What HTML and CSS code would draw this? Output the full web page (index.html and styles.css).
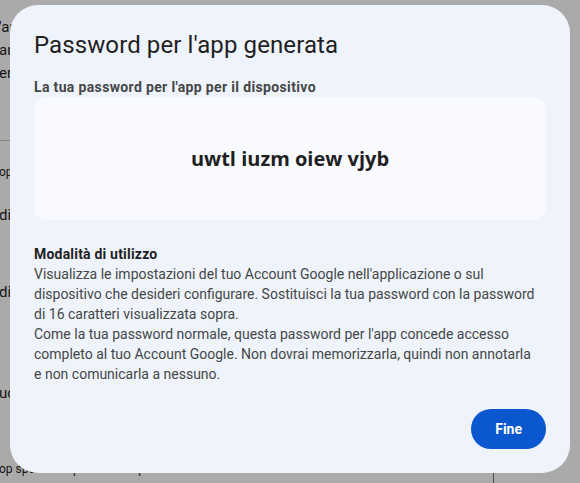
FILE: index.html
```html
<!DOCTYPE html>
<html lang="it">
<head>
  <meta charset="UTF-8">
  <title>Password per l'app generata</title>
  <link rel="stylesheet" href="styles.css">
</head>
<body>

  <!-- Pagina sotto la finestra -->
  <div class="page">
    <p class="page-line">'app</p>
    <p class="page-line">anche</p>
    <p class="page-line">ere</p>
    <hr class="page-rule">
    <p class="page-small">op</p>
    <p class="page-line gap1">dis</p>
    <p class="page-line gap2">dis</p>
    <p class="page-line gap3">uc</p>
    <p class="page-small gap4">op specifiche per il tuo dispositivo</p>
    <div class="page-divider"></div>
  </div>

  <div class="scrim"></div>

  <div class="dialog" role="dialog">
    <h1 class="dialog-title">Password per l'app generata</h1>

    <div class="label">La tua password per l'app per il dispositivo</div>
    <div class="password-box">
      <span class="password">uwtl iuzm oiew vjyb</span>
    </div>

    <div class="usage">
      <div class="usage-title">Modalità di utilizzo</div>
      <p>Visualizza le impostazioni del tuo Account Google nell'applicazione o sul dispositivo che desideri configurare. Sostituisci la tua password con la password di 16 caratteri visualizzata sopra.</p>
      <p>Come la tua password normale, questa password per l'app concede accesso completo al tuo Account Google. Non dovrai memorizzarla, quindi non annotarla e non comunicarla a nessuno.</p>
    </div>

    <div class="actions">
      <button class="btn-done">Fine</button>
    </div>
  </div>

</body>
</html>
```

FILE: styles.css
```css
body {
  margin: 0;
  font-family: Roboto, "Liberation Sans", Arial, sans-serif;
  background: #ffffff;
  color: #1f1f1f;
  overflow: hidden;
  height: 483px;
}

.page {
  margin-left: -1px;
  padding-top: 16px;
  font-size: 15px;
  color: #1f1f1f;
}

.page-line {
  margin: 0;
  line-height: 23px;
}

.page-rule {
  border: none;
  border-top: 1px solid #c4c7c5;
  margin: 55px 0 0;
  width: 300px;
}

.page-small {
  margin: 23px 0 0;
  font-size: 12px;
  line-height: 16px;
}

.gap1 { margin-top: 24px; }
.gap2 { margin-top: 54px; }
.gap3 { margin-top: 78px; }
.gap4 { margin-top: 56px; }

.page-divider {
  position: absolute;
  left: 493px;
  top: 470px;
  width: 1px;
  height: 20px;
  background: #747775;
}

.scrim {
  position: fixed;
  inset: 0;
  background: rgba(0, 0, 0, 0.335);
}

.dialog {
  position: fixed;
  left: 10px;
  top: 5px;
  width: 560px;
  box-sizing: border-box;
  padding: 24px;
  background: #eff3fb;
  border-radius: 28px;
}

.dialog-title {
  margin: 0;
  font-size: 24px;
  font-weight: 400;
  line-height: 32px;
  color: #1f1f1f;
  letter-spacing: 0.1px;
}

.label {
  margin-top: 16px;
  font-size: 14px;
  font-weight: 700;
  line-height: 20px;
  color: #444746;
  letter-spacing: 0.35px;
}

.password-box {
  height: 123px;
  display: flex;
  align-items: center;
  justify-content: center;
  background: #f8faff;
  border-radius: 12px;
}

.password {
  font-family: "Open Sans", Roboto, sans-serif;
  font-size: 20px;
  font-weight: 700;
  color: #1f1f1f;
}

.usage {
  margin-top: 24px;
  max-width: 506px;
  font-size: 14px;
  line-height: 20px;
  color: #444746;
}

.usage-title {
  font-weight: 700;
  color: #1f1f1f;
  letter-spacing: 0.2px;
}

.usage p {
  margin: 0;
}

.actions {
  display: flex;
  justify-content: flex-end;
  margin-top: 25px;
}

.btn-done {
  height: 40px;
  padding: 0 24px;
  border: none;
  border-radius: 20px;
  background: #0b57d0;
  color: #ffffff;
  font-family: Roboto, "Liberation Sans", sans-serif;
  font-size: 14px;
  font-weight: 700;
}
```
